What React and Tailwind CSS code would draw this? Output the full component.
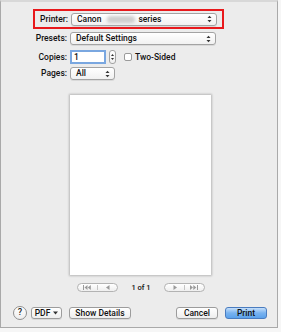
import React from "react";

const font = { fontFamily: 'Roboto, "Liberation Sans", Arial, sans-serif' };

function UpDown({ className = "" }) {
  return (
    <svg width="5" height="8" viewBox="0 0 5 8" className={className}>
      <path d="M0.5 3 L2.5 0.8 L4.5 3 Z" fill="#333" />
      <path d="M0.5 5 L2.5 7.2 L4.5 5 Z" fill="#333" />
    </svg>
  );
}

function Popup({ children, className = "" }) {
  return (
    <div
      className={
        "flex items-center justify-between rounded-[3px] border border-[#a3a3a3] bg-gradient-to-b from-[#ffffff] to-[#f1f1f1] pl-[5px] pr-[4px] shadow-[0_1px_0_rgba(0,0,0,0.08)] " +
        className
      }
    >
      <div className="flex items-center">{children}</div>
      <UpDown />
    </div>
  );
}

function Btn({ children, className = "" }) {
  return (
    <div
      className={
        "flex items-center justify-center rounded-[3px] border border-[#9c9c9c] bg-gradient-to-b from-[#ffffff] to-[#eeeeee] text-[8.5px] font-medium text-[#111] shadow-[0_1px_0_rgba(0,0,0,0.08)] " +
        className
      }
    >
      {children}
    </div>
  );
}

export default function App() {
  return (
    <div className="h-[332px] w-[281px] overflow-hidden bg-[#f6f6f6]" style={font}>
      <div className="flex h-[328px] w-[278px] flex-col border-x border-b border-[#a9a9a9] border-t-2 border-t-[#d8d8d8] bg-[#ececec] text-[8.5px] font-medium text-[#111]">
        {/* printer row */}
        <div className="ml-[32px] mt-[7px] flex h-[20px] w-[191px] items-center border-2 border-[#e8191c]">
          <div className="w-[33px] text-right">Printer:</div>
          <Popup className="ml-[3px] h-[13px] w-[146px]">
            <span>Canon</span>
            <span className="ml-[6px] mr-[3px] h-[7px] w-[28px] rounded-full bg-[#cfcfcf] blur-[1.5px]" />
            <span>series</span>
          </Popup>
        </div>

        {/* presets */}
        <div className="mt-[3px] flex h-[13px] items-center">
          <div className="w-[66px] text-right">Presets:</div>
          <Popup className="ml-[3px] h-[13px] w-[146px]">
            <span>Default Settings</span>
          </Popup>
        </div>

        {/* copies */}
        <div className="mt-[5px] flex h-[14px] items-center">
          <div className="w-[66px] text-right">Copies:</div>
          <div className="ml-[3px] flex h-[14px] w-[36px] items-center border-2 border-[#7aa7e0] bg-white pl-[2px]">
            1
          </div>
          <div className="ml-[3px] flex h-[14px] w-[7px] items-center justify-center rounded-[3px] border border-[#a3a3a3] bg-gradient-to-b from-white to-[#efefef]">
            <svg width="3" height="8" viewBox="0 0 3 8">
              <path d="M0 3 L1.5 1 L3 3 Z" fill="#333" />
              <path d="M0 5 L1.5 7 L3 5 Z" fill="#333" />
            </svg>
          </div>
          <div className="ml-[8px] h-[8px] w-[8px] rounded-[2px] border border-[#9a9a9a] bg-white" />
          <div className="ml-[3px]">Two-Sided</div>
        </div>

        {/* pages */}
        <div className="mt-[3px] flex h-[13px] items-center">
          <div className="w-[66px] text-right">Pages:</div>
          <Popup className="ml-[3px] h-[13px] w-[45px]">
            <span>All</span>
          </Popup>
        </div>

        {/* preview */}
        <div className="ml-[69px] mt-[15px] h-[180px] w-[141px] bg-white shadow-[0_0_2px_1px_rgba(0,0,0,0.22)]" />

        {/* nav */}
        <div className="mt-[8px] flex h-[9px] items-center">
          <div className="ml-[76px] flex h-[9px] w-[41px] items-center rounded-full border border-[#b3b3b3] bg-gradient-to-b from-white to-[#efefef]">
            <div className="flex flex-1 items-center justify-center border-r border-[#c4c4c4]">
              <svg width="9" height="5" viewBox="0 0 9 5">
                <rect x="0" y="0" width="1" height="5" fill="#9a9a9a" />
                <path d="M1.5 2.5 L4.5 0 L4.5 5 Z" fill="#9a9a9a" />
                <path d="M4.8 2.5 L7.8 0 L7.8 5 Z" fill="#9a9a9a" />
              </svg>
            </div>
            <div className="flex flex-1 items-center justify-center">
              <svg width="4" height="5" viewBox="0 0 4 5">
                <path d="M0 2.5 L3.5 0 L3.5 5 Z" fill="#9a9a9a" />
              </svg>
            </div>
          </div>
          <div className="w-[46px] text-center text-[7.5px]">1 of 1</div>
          <div className="flex h-[9px] w-[41px] items-center rounded-full border border-[#b3b3b3] bg-gradient-to-b from-white to-[#efefef]">
            <div className="flex flex-1 items-center justify-center border-r border-[#c4c4c4]">
              <svg width="4" height="5" viewBox="0 0 4 5">
                <path d="M0.5 0 L4 2.5 L0.5 5 Z" fill="#9a9a9a" />
              </svg>
            </div>
            <div className="flex flex-1 items-center justify-center">
              <svg width="9" height="5" viewBox="0 0 9 5">
                <path d="M0 0 L3 2.5 L0 5 Z" fill="#9a9a9a" />
                <path d="M3.3 0 L6.3 2.5 L3.3 5 Z" fill="#9a9a9a" />
                <rect x="7" y="0" width="1" height="5" fill="#9a9a9a" />
              </svg>
            </div>
          </div>
        </div>

        {/* bottom buttons */}
        <div className="mt-[14px] flex h-[14px] items-center">
          <div className="ml-[12px] flex h-[14px] w-[14px] items-center justify-center rounded-full border border-[#8f8f8f] bg-gradient-to-b from-white to-[#eeeeee] text-[9px] text-[#222]">
            ?
          </div>
          <Btn className="ml-[4px] h-[12px] w-[31px]">
            PDF
            <svg width="5" height="4" viewBox="0 0 5 4" className="ml-[3px]">
              <path d="M0 0.5 L5 0.5 L2.5 3.5 Z" fill="#333" />
            </svg>
          </Btn>
          <Btn className="ml-[7px] h-[12px] w-[62px]">Show Details</Btn>
          <Btn className="ml-[45px] h-[12px] w-[42px]">Cancel</Btn>
          <div className="ml-[7px] flex h-[12px] w-[42px] items-center justify-center rounded-[3px] border border-[#4a7cbf] bg-gradient-to-b from-[#c5dffa] via-[#78b2ef] to-[#5ba2ec] text-[8.5px] font-medium text-[#111]">
            Print
          </div>
        </div>
      </div>
    </div>
  );
}
